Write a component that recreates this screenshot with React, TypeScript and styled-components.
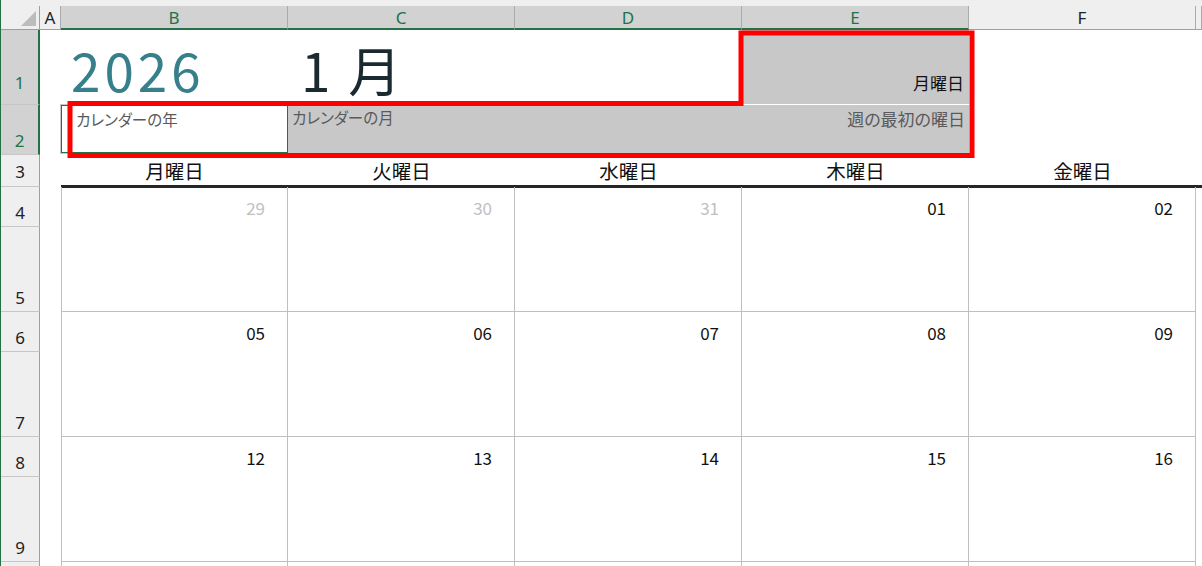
import styled, { createGlobalStyle } from "styled-components";

const green = "#217346";
const grid = "#bfbfbf";
const fill = "#c8c8c8";
const jp = `"Noto Sans CJK JP", "Noto Sans", sans-serif`;

const GlobalStyle = createGlobalStyle`
  html, body {
    margin: 0;
    padding: 0;
    background: #ffffff;
  }
  body {
    font-family: ${jp};
  }
`;

const Frame = styled.div`
  position: relative;
  width: 1202px;
  height: 566px;
  overflow: hidden;
  background: #ffffff;
  border-left: 1px solid ${green};
  box-sizing: border-box;
`;

const TopStrip = styled.div`
  height: 6px;
  background: #efefef;
`;

const Sheet = styled.div`
  display: grid;
  grid-template-columns: 39px 21px repeat(5, 227px) 1fr;
  grid-template-rows: 24px 75px 50px 32px 40px 85px 40px 85px 40px 85px 40px;
`;

type Place = { $col: number; $row: number; $colSpan?: number; $rowSpan?: number };

const placed = ({ $col, $row, $colSpan = 1, $rowSpan = 1 }: Place) => `
  grid-column: ${$col} / span ${$colSpan};
  grid-row: ${$row} / span ${$rowSpan};
`;

const Corner = styled.div<Place>`
  ${placed};
  position: relative;
  background: #efefef;
  border-right: 1px solid #9e9e9e;
  border-bottom: 1px solid #9e9e9e;
  &::after {
    content: "";
    position: absolute;
    right: 3px;
    bottom: 3px;
    border-style: solid;
    border-width: 0 0 15px 15px;
    border-color: transparent transparent #bcbcbc transparent;
  }
`;

const ColHead = styled.div<Place & { $selected?: boolean }>`
  ${placed};
  display: flex;
  align-items: center;
  justify-content: center;
  font-family: "Noto Sans", "Open Sans", sans-serif;
  font-size: 17px;
  color: ${(p) => (p.$selected ? green : "#222222")};
  background: ${(p) => (p.$selected ? "#d2d2d2" : "#efefef")};
  border-right: 1px solid #ababab;
  border-bottom: ${(p) => (p.$selected ? `2px solid ${green}` : "1px solid #9e9e9e")};
  box-sizing: border-box;
`;

const RowHead = styled.div<Place & { $selected?: boolean; $pad?: number }>`
  ${placed};
  display: flex;
  align-items: flex-end;
  justify-content: center;
  padding-bottom: ${(p) => p.$pad ?? 2}px;
  font-family: "Noto Sans", "Open Sans", sans-serif;
  font-size: 17px;
  line-height: 18px;
  color: ${(p) => (p.$selected ? green : "#222222")};
  background: ${(p) => (p.$selected ? "#d2d2d2" : "#efefef")};
  border-right: ${(p) => (p.$selected ? `2px solid ${green}` : "1px solid #9e9e9e")};
  border-bottom: 1px solid #c6c6c6;
  box-sizing: border-box;
`;

const TitleCell = styled.div<Place & { $color: string; $pad: number; $spacing: number }>`
  ${placed};
  display: flex;
  align-items: flex-end;
  padding: 0 0 9px ${(p) => p.$pad}px;
  font-family: ${jp};
  font-size: 53px;
  line-height: 1;
  letter-spacing: ${(p) => p.$spacing}px;
  color: ${(p) => p.$color};
  white-space: pre;
`;

const WeekStartValue = styled.div<Place>`
  ${placed};
  display: flex;
  align-items: flex-end;
  justify-content: flex-end;
  padding: 0 5px 9px 0;
  background: ${fill};
  border-bottom: 1px solid #ffffff;
  font-size: 17px;
  color: #111111;
`;

const LabelCell = styled.div<Place & { $active?: boolean }>`
  ${placed};
  display: flex;
  align-items: flex-start;
  padding: 2px 4px 0 ${(p) => (p.$active ? 14 : 4)}px;
  margin-bottom: 2px;
  background: ${(p) => (p.$active ? "#ffffff" : fill)};
  border: ${(p) => (p.$active ? `1px solid ${green}` : "none")};
  outline: ${(p) => (p.$active ? "1px solid #c8c8c8" : "none")};
  font-size: 15.5px;
  font-feature-settings: "palt";
  color: #5a5a5a;
  box-sizing: border-box;
`;

const LabelSpread = styled.div<Place>`
  ${placed};
  display: flex;
  justify-content: space-between;
  align-items: flex-start;
  padding: 1px 4px 0 4px;
  margin-bottom: 2px;
  background: ${fill};
  color: #5a5a5a;
`;

const LabelText = styled.span<{ $size: number }>`
  font-size: ${(p) => p.$size}px;
  font-feature-settings: "palt";
`;

const DayName = styled.div<Place>`
  ${placed};
  display: flex;
  align-items: flex-end;
  justify-content: center;
  padding-bottom: 2px;
  font-size: 19.5px;
  line-height: 24px;
  color: #111111;
  border-bottom: 3px solid #262626;
  margin-bottom: -1px;
`;

const DateCell = styled.div<Place & { $muted?: boolean }>`
  ${placed};
  display: flex;
  justify-content: flex-end;
  align-items: flex-start;
  padding: 8px 22px 0 0;
  font-family: ${jp};
  font-size: 17px;
  color: ${(p) => (p.$muted ? "#c0c0c0" : "#111111")};
  border-right: 1px solid ${grid};
  border-bottom: 1px solid ${grid};
  border-left: ${(p) => (p.$col === 3 ? `1px solid ${grid}` : "none")};
  box-sizing: border-box;
`;

const Annotation = styled.svg`
  position: absolute;
  left: 0;
  top: 0;
  pointer-events: none;
`;

const columns = ["B", "C", "D", "E", "F"];
const dayNames = ["月曜日", "火曜日", "水曜日", "木曜日", "金曜日"];
const weeks = [
  [
    { d: "29", muted: true },
    { d: "30", muted: true },
    { d: "31", muted: true },
    { d: "01" },
    { d: "02" },
  ],
  [{ d: "05" }, { d: "06" }, { d: "07" }, { d: "08" }, { d: "09" }],
  [{ d: "12" }, { d: "13" }, { d: "14" }, { d: "15" }, { d: "16" }],
  [{ d: "" }, { d: "" }, { d: "" }, { d: "" }, { d: "" }],
];
const rowHeads = [
  { n: "1", pad: 12, sel: true },
  { n: "2", pad: 4, sel: true },
  { n: "3", pad: 5 },
  { n: "4", pad: 4 },
  { n: "5", pad: 4 },
  { n: "6", pad: 4 },
  { n: "7", pad: 4 },
  { n: "8", pad: 4 },
  { n: "9", pad: 4 },
  { n: "", pad: 4 },
];

export default function App() {
  return (
    <>
      <GlobalStyle />
      <Frame>
        <TopStrip />
        <Sheet>
          <Corner $col={1} $row={1} />
          <ColHead $col={2} $row={1}>A</ColHead>
          {columns.map((c, i) => (
            <ColHead key={c} $col={i + 3} $row={1} $selected={i < 4}>
              {c}
            </ColHead>
          ))}
          <ColHead $col={8} $row={1} />

          {rowHeads.map((r, i) => (
            <RowHead key={i} $col={1} $row={i + 2} $selected={r.sel} $pad={r.pad}>
              {r.n}
            </RowHead>
          ))}

          <TitleCell $col={3} $row={2} $color="#367f8b" $pad={10} $spacing={4}>
            2026
          </TitleCell>
          <TitleCell $col={4} $row={2} $colSpan={2} $color="#1b2a30" $pad={13} $spacing={3}>
            {"1 月"}
          </TitleCell>
          <WeekStartValue $col={6} $row={2}>月曜日</WeekStartValue>

          <LabelCell $col={3} $row={3} $active>
            カレンダーの年
          </LabelCell>
          <LabelSpread $col={4} $row={3} $colSpan={3}>
            <LabelText $size={15.5}>カレンダーの月</LabelText>
            <LabelText $size={17}>週の最初の曜日</LabelText>
          </LabelSpread>

          {dayNames.map((d, i) => (
            <DayName key={d} $col={i + 3} $row={4}>
              {d}
            </DayName>
          ))}
          <DayName $col={8} $row={4} />

          {weeks.map((w, wi) =>
            w.map((cell, ci) => (
              <DateCell
                key={`${wi}-${ci}`}
                $col={ci + 3}
                $row={5 + wi * 2}
                $rowSpan={2}
                $muted={cell.muted}
              >
                {cell.d}
              </DateCell>
            ))
          )}
        </Sheet>

        <Annotation width="1202" height="566" viewBox="0 0 1202 566">
          <polygon
            points="69,103.5 740,103.5 740,33 971,33 971,155.5 69,155.5"
            fill="none"
            stroke="#ff0000"
            strokeWidth="5"
            strokeLinejoin="miter"
          />
        </Annotation>
      </Frame>
    </>
  );
}
